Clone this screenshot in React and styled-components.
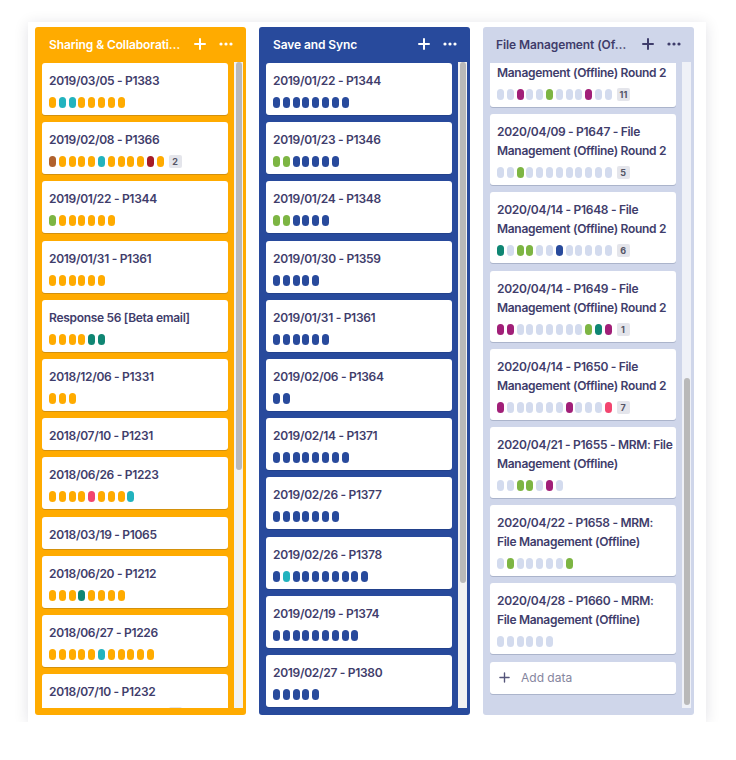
import React from "react";
import styled, { createGlobalStyle } from "styled-components";

const COLORS = {
  o: "#ffab00",
  t: "#22b3be",
  d: "#0f8673",
  n: "#b0612d",
  r: "#a51b28",
  g: "#7db543",
  p: "#f2456f",
  m: "#a11f78",
  b: "#284a9c",
  l: "#d3dbee",
};

const columns = [
  {
    title: "Sharing & Collaboration",
    bg: "#ffab00",
    fg: "#ffffff",
    pl: 14,
    track: "#f2f2f2",
    thumb: { top: 0, h: 408 },
    offset: 0,
    cards: [
      { title: "2019/03/05 - P1383", labels: "ottooooo" },
      { title: "2019/02/08 - P1366", labels: "nooootooooro", badge: "2" },
      { title: "2019/01/22 - P1344", labels: "goooooo" },
      { title: "2019/01/31 - P1361", labels: "oooooo" },
      { title: "Response 56 [Beta email]", labels: "oooodd" },
      { title: "2018/12/06 - P1331", labels: "ooo" },
      { title: "2018/07/10 - P1231", labels: "" },
      { title: "2018/06/26 - P1223", labels: "oooopooot" },
      { title: "2018/03/19 - P1065", labels: "" },
      { title: "2018/06/20 - P1212", labels: "ooodoooo" },
      { title: "2018/06/27 - P1226", labels: "oooootooooo" },
      { title: "2018/07/10 - P1232", labels: "ttoootoooopo", badge: "3" },
    ],
  },
  {
    title: "Save and Sync",
    bg: "#284a9c",
    fg: "#ffffff",
    pl: 14,
    track: "#f2f2f2",
    thumb: { top: 0, h: 521 },
    offset: 0,
    cards: [
      { title: "2019/01/22 - P1344", labels: "bbbbbbbb" },
      { title: "2019/01/23 - P1346", labels: "ggbbbbb" },
      { title: "2019/01/24 - P1348", labels: "ggbbbb" },
      { title: "2019/01/30 - P1359", labels: "bbbbb" },
      { title: "2019/01/31 - P1361", labels: "bbbbbb" },
      { title: "2019/02/06 - P1364", labels: "bb" },
      { title: "2019/02/14 - P1371", labels: "bbbbbbbb" },
      { title: "2019/02/26 - P1377", labels: "bbbbbbb" },
      { title: "2019/02/26 - P1378", labels: "btbbbbbbbb" },
      { title: "2019/02/19 - P1374", labels: "bbbbbbbbb" },
      { title: "2019/02/27 - P1380", labels: "bbbbb" },
    ],
  },
  {
    title: "File Management (Offline)",
    bg: "#cfd6ea",
    fg: "#3f3d6b",
    pl: 13,
    track: "#eff1f7",
    thumb: { top: 316, h: 327 },
    offset: -27,
    addData: true,
    cards: [
      { title: "2020/04/09 - P1646 - File\nManagement (Offline) Round 2", labels: "llmllglllmll", badge: "11" },
      { title: "2020/04/09 - P1647 - File\nManagement (Offline) Round 2", labels: "llglllllllll", badge: "5" },
      { title: "2020/04/14 - P1648 - File\nManagement (Offline) Round 2", labels: "dlggllblllll", badge: "6" },
      { title: "2020/04/14 - P1649 - File\nManagement (Offline) Round 2", labels: "mmlllllllgdm", badge: "1" },
      { title: "2020/04/14 - P1650 - File\nManagement (Offline) Round 2", labels: "mllllllmlllp", badge: "7" },
      { title: "2020/04/21 - P1655 - MRM: File\nManagement (Offline)", labels: "llgglml" },
      { title: "2020/04/22 - P1658 - MRM:\nFile Management (Offline)", labels: "lglllllg" },
      { title: "2020/04/28 - P1660 - MRM:\nFile Management (Offline)", labels: "llllll" },
    ],
  },
];

const GlobalStyle = createGlobalStyle`
  body {
    margin: 0;
    background: #ffffff;
    font-family: Inter, "Noto Sans", sans-serif;
  }
`;

const Page = styled.div`
  padding: 22px 0 0 28px;
`;

const Board = styled.div`
  width: 678px;
  height: 700px;
  box-sizing: border-box;
  padding: 5px 7px;
  display: flex;
  gap: 13px;
  background: #ffffff;
  box-shadow: 0 2px 14px rgba(20, 20, 50, 0.12);
`;

const Column = styled.section`
  width: 211px;
  height: 688px;
  flex: none;
  display: flex;
  flex-direction: column;
  background: ${(p) => p.$bg};
  border-radius: 3px;
  overflow: hidden;
`;

const Header = styled.header`
  height: 36px;
  flex: none;
  box-sizing: border-box;
  display: flex;
  align-items: center;
  padding: 0 13px 2px ${(p) => p.$pl}px;
  color: ${(p) => p.$fg};
`;

const HeaderTitle = styled.div`
  flex: 1;
  min-width: 0;
  font-size: 12px;
  font-weight: 600;
  letter-spacing: -0.1px;
  white-space: nowrap;
  overflow: hidden;
  text-overflow: ellipsis;
  margin-right: 12px;
`;

const Actions = styled.div`
  display: flex;
  align-items: center;
  gap: 13px;
`;

const Body = styled.div`
  flex: 1;
  min-height: 0;
  display: flex;
  padding: 0 3px 7px 7px;
`;

const List = styled.div`
  width: 186px;
  flex: none;
  overflow: hidden;
`;

const ListInner = styled.div`
  margin-top: ${(p) => p.$offset}px;
  display: flex;
  flex-direction: column;
  gap: 7.2px;
`;

const Track = styled.div`
  width: 9px;
  margin-left: 6px;
  margin-top: -1px;
  background: ${(p) => p.$bg};
  display: flex;
  flex-direction: column;
  align-items: center;
`;

const Thumb = styled.div`
  width: 6px;
  margin-top: ${(p) => p.$top}px;
  height: ${(p) => p.$h}px;
  border-radius: 3px;
  background: #b9b9b9;
`;

const Card = styled.div`
  flex: none;
  background: #ffffff;
  border-radius: 3px;
  padding: 8px 7px 5px;
  box-shadow: 0 1px 0 rgba(9, 30, 66, 0.18);
`;

const CardTitle = styled.div`
  font-size: 12px;
  line-height: 19px;
  font-weight: 600;
  letter-spacing: -0.3px;
  color: #3f3d6b;
  white-space: pre;
`;

const Labels = styled.div`
  height: 11px;
  display: flex;
  align-items: center;
  gap: 2.8px;
  margin: 7px 0 2px;
`;

const Pill = styled.span`
  width: 7px;
  height: 11px;
  flex: none;
  border-radius: 4px;
  background: ${(p) => p.$c};
`;

const Badge = styled.span`
  height: 13px;
  min-width: 13px;
  flex: none;
  box-sizing: border-box;
  padding: 0 3px;
  margin-left: 2px;
  border-radius: 2px;
  background: #e4e5eb;
  color: #555566;
  font-size: 9px;
  font-weight: 700;
  display: flex;
  align-items: center;
  justify-content: center;
`;

const AddCard = styled.div`
  flex: none;
  height: 32px;
  box-sizing: border-box;
  display: flex;
  align-items: center;
  gap: 11px;
  padding: 0 9px;
  background: #ffffff;
  border-radius: 3px;
  box-shadow: 0 1px 0 rgba(9, 30, 66, 0.18);
  color: #85859e;
  font-size: 12px;
`;

const PlusIcon = ({ color, size = 12, width = 2 }) => (
  <svg width={size} height={size} viewBox="0 0 12 12">
    <path d="M6 1v10M1 6h10" stroke={color} strokeWidth={width} strokeLinecap="round" />
  </svg>
);

const DotsIcon = ({ color }) => (
  <svg width="14" height="4" viewBox="0 0 14 4">
    <circle cx="2" cy="2" r="1.6" fill={color} />
    <circle cx="7" cy="2" r="1.6" fill={color} />
    <circle cx="12" cy="2" r="1.6" fill={color} />
  </svg>
);

const TaskCard = ({ card }) => (
  <Card>
    <CardTitle>{card.title}</CardTitle>
    {card.labels && (
      <Labels>
        {card.labels.split("").map((k, i) => (
          <Pill key={i} $c={COLORS[k]} />
        ))}
        {card.badge && <Badge>{card.badge}</Badge>}
      </Labels>
    )}
  </Card>
);

export default function App() {
  return (
    <>
      <GlobalStyle />
      <Page>
        <Board>
          {columns.map((col) => (
            <Column key={col.title} $bg={col.bg}>
              <Header $fg={col.fg} $pl={col.pl}>
                <HeaderTitle>{col.title}</HeaderTitle>
                <Actions>
                  <PlusIcon color={col.fg} />
                  <DotsIcon color={col.fg} />
                </Actions>
              </Header>
              <Body>
                <List>
                  <ListInner $offset={col.offset}>
                    {col.cards.map((c, i) => (
                      <TaskCard key={i} card={c} />
                    ))}
                    {col.addData && (
                      <AddCard>
                        <PlusIcon color="#55557a" size={11} width={1.5} />
                        Add data
                      </AddCard>
                    )}
                  </ListInner>
                </List>
                <Track $bg={col.track}>
                  <Thumb $top={col.thumb.top} $h={col.thumb.h} />
                </Track>
              </Body>
            </Column>
          ))}
        </Board>
      </Page>
    </>
  );
}
